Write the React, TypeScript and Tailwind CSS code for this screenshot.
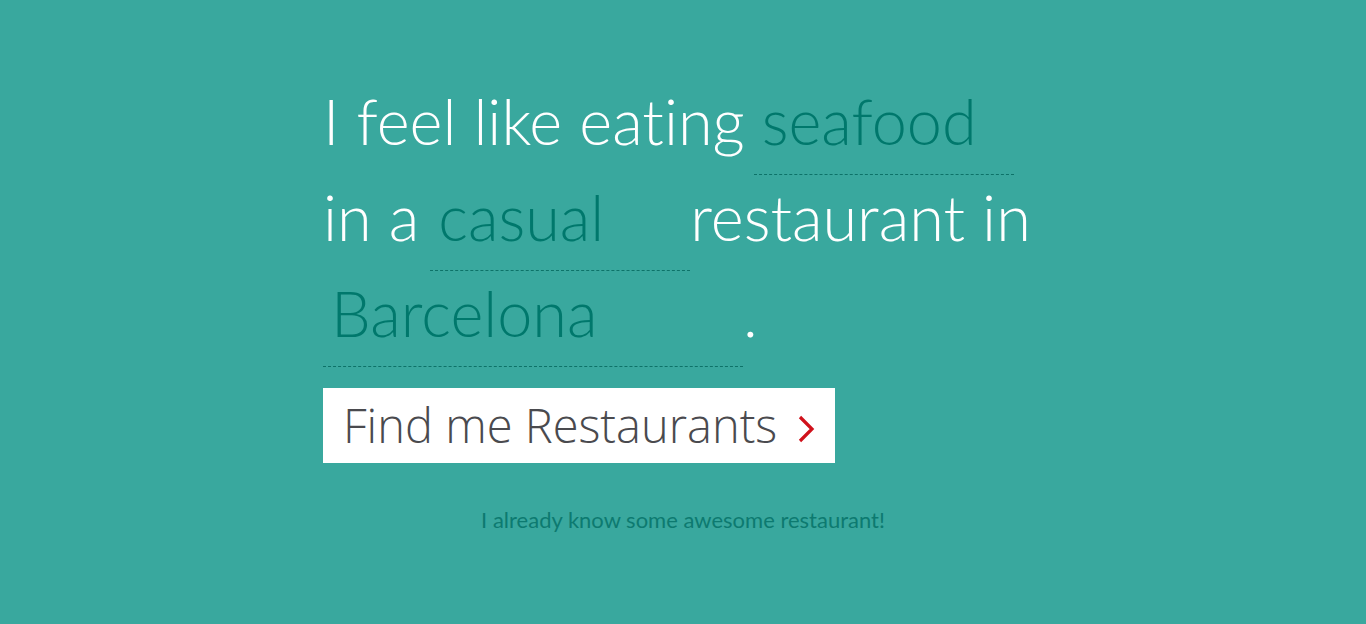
import React from 'react';

const lato = { fontFamily: 'Lato, "Liberation Sans", sans-serif' };

function Pick({ value, width, className = '' }: { value: string; width: number; className?: string }) {
  return (
    <input
      type="text"
      defaultValue={value}
      style={{ width }}
      className={`bg-transparent text-[#00786c] text-[63px] font-light leading-[76px] pl-2 pb-[15px] pt-0 border-0 border-b border-dashed border-[#0d7268] outline-none [font-variant-ligatures:none] ${className}`}
    />
  );
}

export default function App() {
  return (
    <div className="min-h-[624px] w-full bg-[#39a89e]" style={lato}>
      <div className="mx-auto w-[720px] pt-[83px]">
        <form className="text-white text-[63px] font-light leading-[76px] [font-variant-ligatures:none] whitespace-nowrap">
          <div className="flex items-baseline h-[96px]">
            <span>I feel like eating</span>
            <Pick value="seafood" width={260} className="ml-[9px]" />
          </div>
          <div className="flex items-baseline h-[96px]">
            <span>in a</span>
            <Pick value="casual" width={260} className="ml-[11px]" />
            <span>restaurant in</span>
          </div>
          <div className="flex items-baseline h-[96px]">
            <Pick value="Barcelona" width={420} />
            <span>.</span>
          </div>
        </form>

        <button
          type="button"
          className="mt-[17px] h-[75px] w-[512px] bg-white flex items-center pl-[20px] pr-[20px] gap-[20px] text-[#4a4a4e] text-[47px] font-light whitespace-nowrap"
          style={{ fontFamily: '"Open Sans", "Noto Sans", sans-serif' }}
        >
          <span className="leading-none shrink-0">Find me Restaurants</span>
          <svg width="18" height="28" viewBox="0 0 18 28" className="mt-[6px] shrink-0">
            <path d="M3 2 L15 14 L3 26" fill="none" stroke="#d0111b" strokeWidth="3.2" />
          </svg>
        </button>
      </div>

      <div className="mt-[40px] text-center text-[22px] text-[#0d7a70]">
        <a href="#" className="hover:underline">I already know some awesome restaurant!</a>
      </div>
    </div>
  );
}
